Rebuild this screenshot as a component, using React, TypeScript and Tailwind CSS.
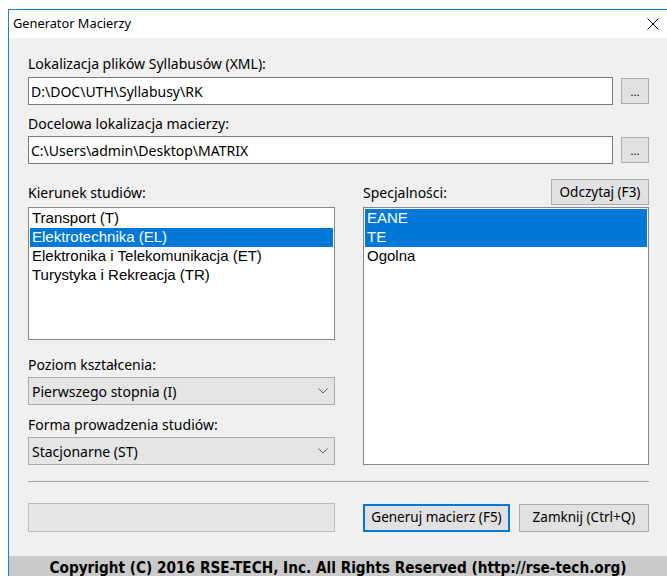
import React from "react";

const ui = "font-['Noto_Sans',Arial,sans-serif]";
const listFont = "font-['Liberation_Sans',Arial,sans-serif]";

function Label({ children, className = "" }: { children: React.ReactNode; className?: string }) {
  return <div className={`h-4 text-[14px] leading-4 text-black ${className}`}>{children}</div>;
}

function PathRow({ value }: { value: string }) {
  return (
    <div className="flex items-start gap-2">
      <div className="flex h-[28px] flex-1 items-center border border-[#7a7a7a] bg-white pl-[2px] text-[14px] text-black">
        {value}
      </div>
      <button className="mt-px flex h-[26px] w-[28px] items-end justify-center border border-[#adadad] bg-[#e1e1e1] pb-[6px] text-[11px] leading-none text-black">
        ...
      </button>
    </div>
  );
}

function ListBox({ items, selected, className = "" }: { items: string[]; selected: number[]; className?: string }) {
  return (
    <div className={`border border-[#828790] bg-white p-px ${listFont} ${className}`}>
      {items.map((it, i) => (
        <div
          key={it}
          className={`h-[19px] pl-[2px] text-[15px] leading-[18px] ${
            selected.includes(i) ? "bg-[#0078d7] text-white" : "text-black"
          }`}
        >
          {it}
        </div>
      ))}
    </div>
  );
}

function Combo({ value }: { value: string }) {
  return (
    <div className="flex h-[28px] items-center justify-between border border-[#adadad] bg-[#e5e5e5] pl-[3px] pr-[6px] text-[14px] text-black">
      <span>{value}</span>
      <svg width="10" height="6" viewBox="0 0 10 6" fill="none">
        <path d="M0.5 0.5 L5 5 L9.5 0.5" stroke="#606060" strokeWidth="1" />
      </svg>
    </div>
  );
}

export default function App() {
  return (
    <div className={`h-[576px] w-[667px] overflow-hidden bg-white pl-2 pt-[9px] ${ui}`}>
      <div className="w-[700px] border-l border-t border-[#1883d7] bg-[#f0f0f0]">
        {/* title bar */}
        <div className="flex h-[28px] items-center justify-between bg-white pl-[4px] pr-[49px]">
          <span className="text-[12.8px] text-black">Generator Macierzy</span>
          <svg width="12" height="12" viewBox="0 0 12 12">
            <path d="M0.5 0.5 L11.5 11.5 M11.5 0.5 L0.5 11.5" stroke="#000" strokeWidth="1" />
          </svg>
        </div>

        <div className="ml-[19px] w-[621px] pt-[18px]">
          <Label className="mb-[5px]">Lokalizacja plików Syllabusów (XML):</Label>
          <PathRow value="D:\DOC\UTH\Syllabusy\RK" />

          <Label className="mb-[4px] mt-[11px]">Docelowa lokalizacja macierzy:</Label>
          <PathRow value="C:\Users\admin\Desktop\MATRIX" />

          <div className="mt-[15px] flex gap-[28px]">
            <div className="flex w-[307px] flex-col">
              <div className="flex h-[28px] items-end pb-[6px]">
                <Label>Kierunek studiów:</Label>
              </div>
              <ListBox
                className="h-[133px]"
                items={[
                  "Transport (T)",
                  "Elektrotechnika (EL)",
                  "Elektronika i Telekomunikacja (ET)",
                  "Turystyka i Rekreacja (TR)",
                ]}
                selected={[1]}
              />
              <Label className="mb-[4px] mt-[17px]">Poziom kształcenia:</Label>
              <Combo value="Pierwszego stopnia (I)" />
              <Label className="mb-[4px] mt-[12px]">Forma prowadzenia studiów:</Label>
              <Combo value="Stacjonarne (ST)" />
            </div>

            <div className="flex flex-1 flex-col">
              <div className="flex h-[28px] items-start justify-between">
                <Label className="mt-[6px]">Specjalności:</Label>
                <button className="h-[26px] w-[98px] border border-[#adadad] bg-[#e1e1e1] text-[13.5px] text-black">
                  Odczytaj (F3)
                </button>
              </div>
              <ListBox className="h-[258px]" items={["EANE", "TE", "Ogolna"]} selected={[0, 1]} />
            </div>
          </div>

          <div className="mt-[16px] h-px bg-[#a0a0a0]" />

          <div className="mt-[21px] flex items-center">
            <div className="h-[29px] w-[307px] border border-[#bcbcbc] bg-[#e6e6e6]" />
            <button className="ml-[28px] h-[28px] w-[147px] border-2 border-[#0078d7] bg-[#e1e1e1] text-[13.5px] text-black">
              Generuj macierz (F5)
            </button>
            <button className="ml-[9px] h-[28px] w-[130px] border border-[#adadad] bg-[#e1e1e1] text-[13.5px] text-black">
              Zamknij (Ctrl+Q)
            </button>
          </div>
        </div>

        <div className="mt-[24px] h-[40px] w-[658px] bg-[#cacaca] pt-[3px] text-center font-['DejaVu_Sans_Condensed','DejaVu_Sans',sans-serif] text-[15.2px] font-bold leading-[18px] text-black">
          Copyright (C) 2016 RSE-TECH, Inc. All Rights Reserved (http://rse-tech.org)
        </div>
      </div>
    </div>
  );
}
